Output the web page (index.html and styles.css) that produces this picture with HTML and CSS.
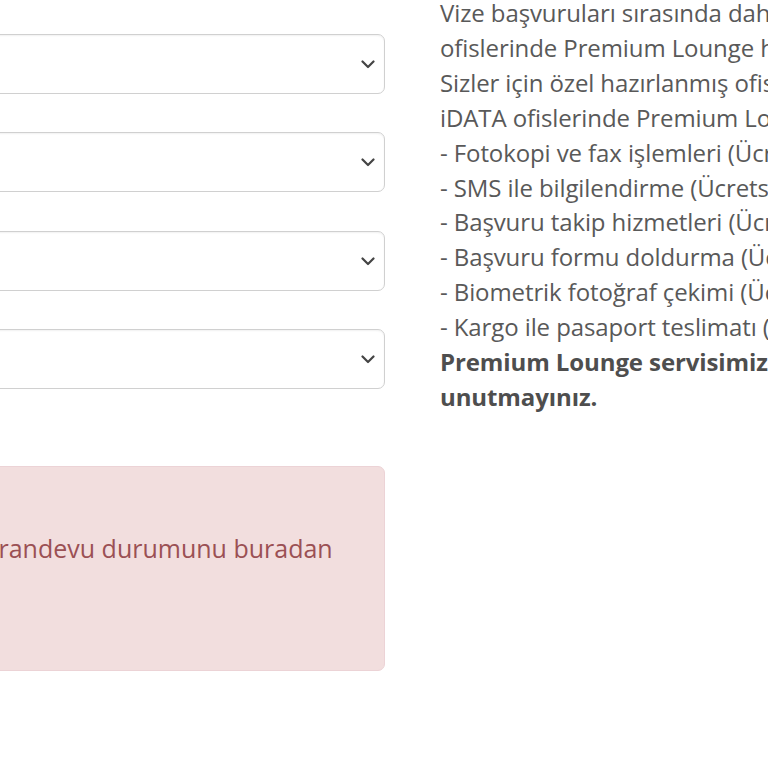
FILE: index.html
```html
<!DOCTYPE html>
<html lang="tr">
<head>
<meta charset="utf-8">
<title>Randevu</title>
<link rel="stylesheet" href="styles.css">
</head>
<body>
<div class="row">
  <div class="col-form">
    <form class="form">
      <div class="select-wrap">
        <select class="select"><option></option></select>
        <svg class="chevron" width="14" height="9" viewBox="0 0 14 9"><path d="M1.5 1.5 L7 7 L12.5 1.5" fill="none" stroke="#444" stroke-width="2.2" stroke-linecap="round" stroke-linejoin="round"/></svg>
      </div>
      <div class="select-wrap">
        <select class="select"><option></option></select>
        <svg class="chevron" width="14" height="9" viewBox="0 0 14 9"><path d="M1.5 1.5 L7 7 L12.5 1.5" fill="none" stroke="#444" stroke-width="2.2" stroke-linecap="round" stroke-linejoin="round"/></svg>
      </div>
      <div class="select-wrap">
        <select class="select"><option></option></select>
        <svg class="chevron" width="14" height="9" viewBox="0 0 14 9"><path d="M1.5 1.5 L7 7 L12.5 1.5" fill="none" stroke="#444" stroke-width="2.2" stroke-linecap="round" stroke-linejoin="round"/></svg>
      </div>
      <div class="select-wrap">
        <select class="select"><option></option></select>
        <svg class="chevron" width="14" height="9" viewBox="0 0 14 9"><path d="M1.5 1.5 L7 7 L12.5 1.5" fill="none" stroke="#444" stroke-width="2.2" stroke-linecap="round" stroke-linejoin="round"/></svg>
      </div>
    </form>
    <div class="alert">
      <p class="alert-text">randevu durumunu buradan</p>
    </div>
  </div>
  <div class="col-info">
    <p class="info">Vize başvuruları sırasında daha konforlu bir ortam için iDATA<br>ofislerinde Premium Lounge hizmetimizden yararlanabilirsiniz.<br>Sizler için özel hazırlanmış ofislerimizde hizmet vermekteyiz.<br>iDATA ofislerinde Premium Lounge hizmetleri:<br>- Fotokopi ve fax işlemleri (Ücretsiz)<br>- SMS ile bilgilendirme (Ücretsiz)<br>- Başvuru takip hizmetleri (Ücretsiz)<br>- Başvuru formu doldurma (Ücretsiz)<br>- Biometrik fotoğraf çekimi (Ücretsiz)<br>- Kargo ile pasaport teslimatı (Ücretli)<br><strong>Premium Lounge servisimizin ücretli olduğunu</strong><br><strong>unutmayınız.</strong></p>
  </div>
</div>
</body>
</html>
```

FILE: styles.css
```css
html, body {
  margin: 0;
  padding: 0;
  width: 768px;
  height: 768px;
  overflow: hidden;
  background: #fff;
}

body {
  font-family: "Open Sans", "Noto Sans", sans-serif;
  font-size: 24px;
  line-height: 34.9px;
  color: #595959;
}

.row {
  display: flex;
  align-items: flex-start;
  gap: 55px;
  margin-left: -28.5px;
}

.col-form {
  flex: 0 0 413.5px;
  padding-top: 33.5px;
}

.form {
  display: flex;
  flex-direction: column;
  gap: 38.5px;
}

.select-wrap {
  position: relative;
  height: 60px;
}

.select {
  appearance: none;
  -webkit-appearance: none;
  box-sizing: border-box;
  display: block;
  width: 100%;
  height: 60px;
  margin: 0;
  border: 1.5px solid #d0d0d0;
  border-radius: 7px;
  background: #fff;
  box-shadow: inset 0 1px 2px rgba(0, 0, 0, 0.06);
  font: inherit;
}

.chevron {
  position: absolute;
  right: 10.5px;
  top: 26px;
}

.alert {
  margin-top: 76.5px;
  box-sizing: border-box;
  height: 205px;
  background: #f2dede;
  border: 1px solid #ecd3d6;
  border-radius: 7px;
  padding: 64px 26px 0 26px;
}

.alert-text {
  margin: 0;
  font-size: 25px;
  line-height: 34.7px;
  color: #9b5054;
  white-space: nowrap;
}

.col-info {
  flex: 0 0 auto;
  margin-top: -4px;
}

.info {
  margin: 0;
  white-space: nowrap;
  letter-spacing: -0.1px;
}

.info strong {
  font-weight: 700;
  color: #4e4e4e;
}
```
